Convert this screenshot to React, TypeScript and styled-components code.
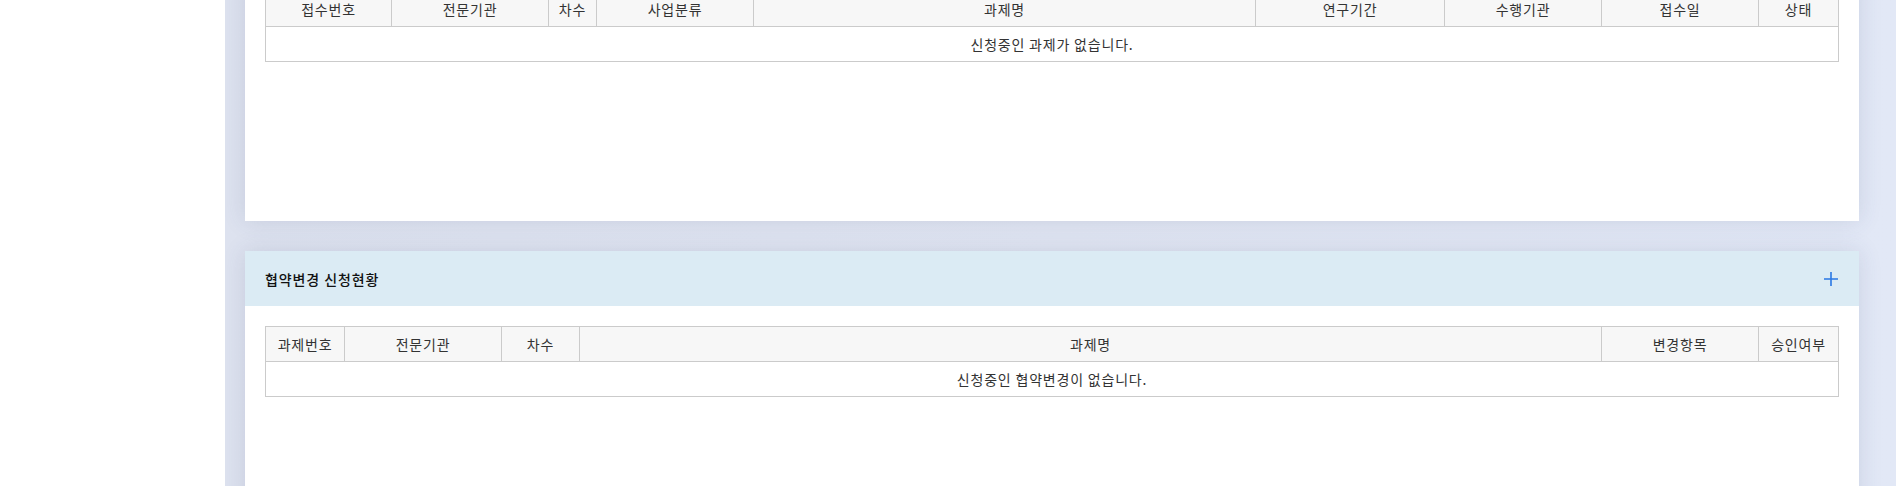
import React from "react";
import styled, { createGlobalStyle } from "styled-components";

const Global = createGlobalStyle`
  html, body { margin: 0; padding: 0; overflow: hidden; }
  body {
    font-family: "Noto Sans CJK KR", "Noto Sans", sans-serif;
    color: #333;
    background: #fff;
  }
`;

const Layout = styled.div`
  display: flex;
  width: 1896px;
  height: 486px;
  overflow: hidden;
`;

const Sidebar = styled.aside`
  flex: 0 0 225px;
  background: #fff;
`;

const Main = styled.main`
  flex: 1;
  background: linear-gradient(90deg, #dde2ef 0%, #e0e5f2 50%, #e2e8f6 100%);
  padding: 0 37px 0 20px;
  overflow: hidden;
`;

const Scroller = styled.div<{ $offset: number }>`
  display: flex;
  flex-direction: column;
  gap: 30px;
  margin-top: ${(p) => -p.$offset}px;
`;

const Card = styled.section`
  background: #fff;
  box-shadow: 0 0 22px rgba(60, 70, 110, 0.14);
`;

const CardHeader = styled.header`
  height: 55px;
  display: flex;
  align-items: center;
  justify-content: space-between;
  padding: 0 20px;
  background: #dbebf4;
`;

const Title = styled.h3`
  margin: 0;
  font-size: 14px;
  font-weight: 500;
  color: #111;
  letter-spacing: 0.9px;
`;

const PlusButton = styled.button`
  border: 0;
  background: none;
  padding: 0;
  width: 16px;
  height: 16px;
  display: flex;
  cursor: pointer;
`;

const CardBody = styled.div`
  padding: 20px;
  min-height: 250px;
  box-sizing: border-box;
`;

const Table = styled.table`
  width: 100%;
  border-collapse: collapse;
  table-layout: fixed;
  font-size: 14px;
  letter-spacing: 0.8px;
`;

const Th = styled.th`
  height: 35px;
  padding: 0;
  background: #f7f7f7;
  border: 1px solid #cbcbcb;
  font-weight: 400;
  color: #333;
  text-align: center;
  box-sizing: border-box;
`;

const Td = styled.td`
  height: 35px;
  padding: 0;
  border: 1px solid #cbcbcb;
  text-align: center;
  color: #333;
  box-sizing: border-box;
`;

const Plus = () => (
  <svg width="16" height="16" viewBox="0 0 16 16">
    <path d="M8 1v14M1 8h14" stroke="#2a78e4" strokeWidth="1.6" fill="none" />
  </svg>
);

type Col = { label: string; width?: number };

const DataTable = ({ cols, empty }: { cols: Col[]; empty: string }) => (
  <Table>
    <colgroup>
      {cols.map((c, i) => (
        <col key={i} style={c.width ? { width: c.width } : undefined} />
      ))}
    </colgroup>
    <thead>
      <tr>
        {cols.map((c) => (
          <Th key={c.label}>{c.label}</Th>
        ))}
      </tr>
    </thead>
    <tbody>
      <tr>
        <Td colSpan={cols.length}>{empty}</Td>
      </tr>
    </tbody>
  </Table>
);

const projectCols: Col[] = [
  { label: "접수번호", width: 126 },
  { label: "전문기관", width: 157 },
  { label: "차수", width: 48 },
  { label: "사업분류", width: 157 },
  { label: "과제명" },
  { label: "연구기간", width: 189 },
  { label: "수행기관", width: 157 },
  { label: "접수일", width: 157 },
  { label: "상태", width: 80 },
];

const changeCols: Col[] = [
  { label: "과제번호", width: 79 },
  { label: "전문기관", width: 157 },
  { label: "차수", width: 78 },
  { label: "과제명" },
  { label: "변경항목", width: 157 },
  { label: "승인여부", width: 80 },
];

export default function App() {
  return (
    <>
      <Global />
      <Layout>
        <Sidebar />
        <Main>
          <Scroller $offset={84}>
            <Card>
              <CardHeader>
                <Title>과제 신청현황</Title>
                <PlusButton aria-label="더보기">
                  <Plus />
                </PlusButton>
              </CardHeader>
              <CardBody>
                <DataTable cols={projectCols} empty="신청중인 과제가 없습니다." />
              </CardBody>
            </Card>
            <Card>
              <CardHeader>
                <Title>협약변경 신청현황</Title>
                <PlusButton aria-label="더보기">
                  <Plus />
                </PlusButton>
              </CardHeader>
              <CardBody>
                <DataTable cols={changeCols} empty="신청중인 협약변경이 없습니다." />
              </CardBody>
            </Card>
          </Scroller>
        </Main>
      </Layout>
    </>
  );
}
